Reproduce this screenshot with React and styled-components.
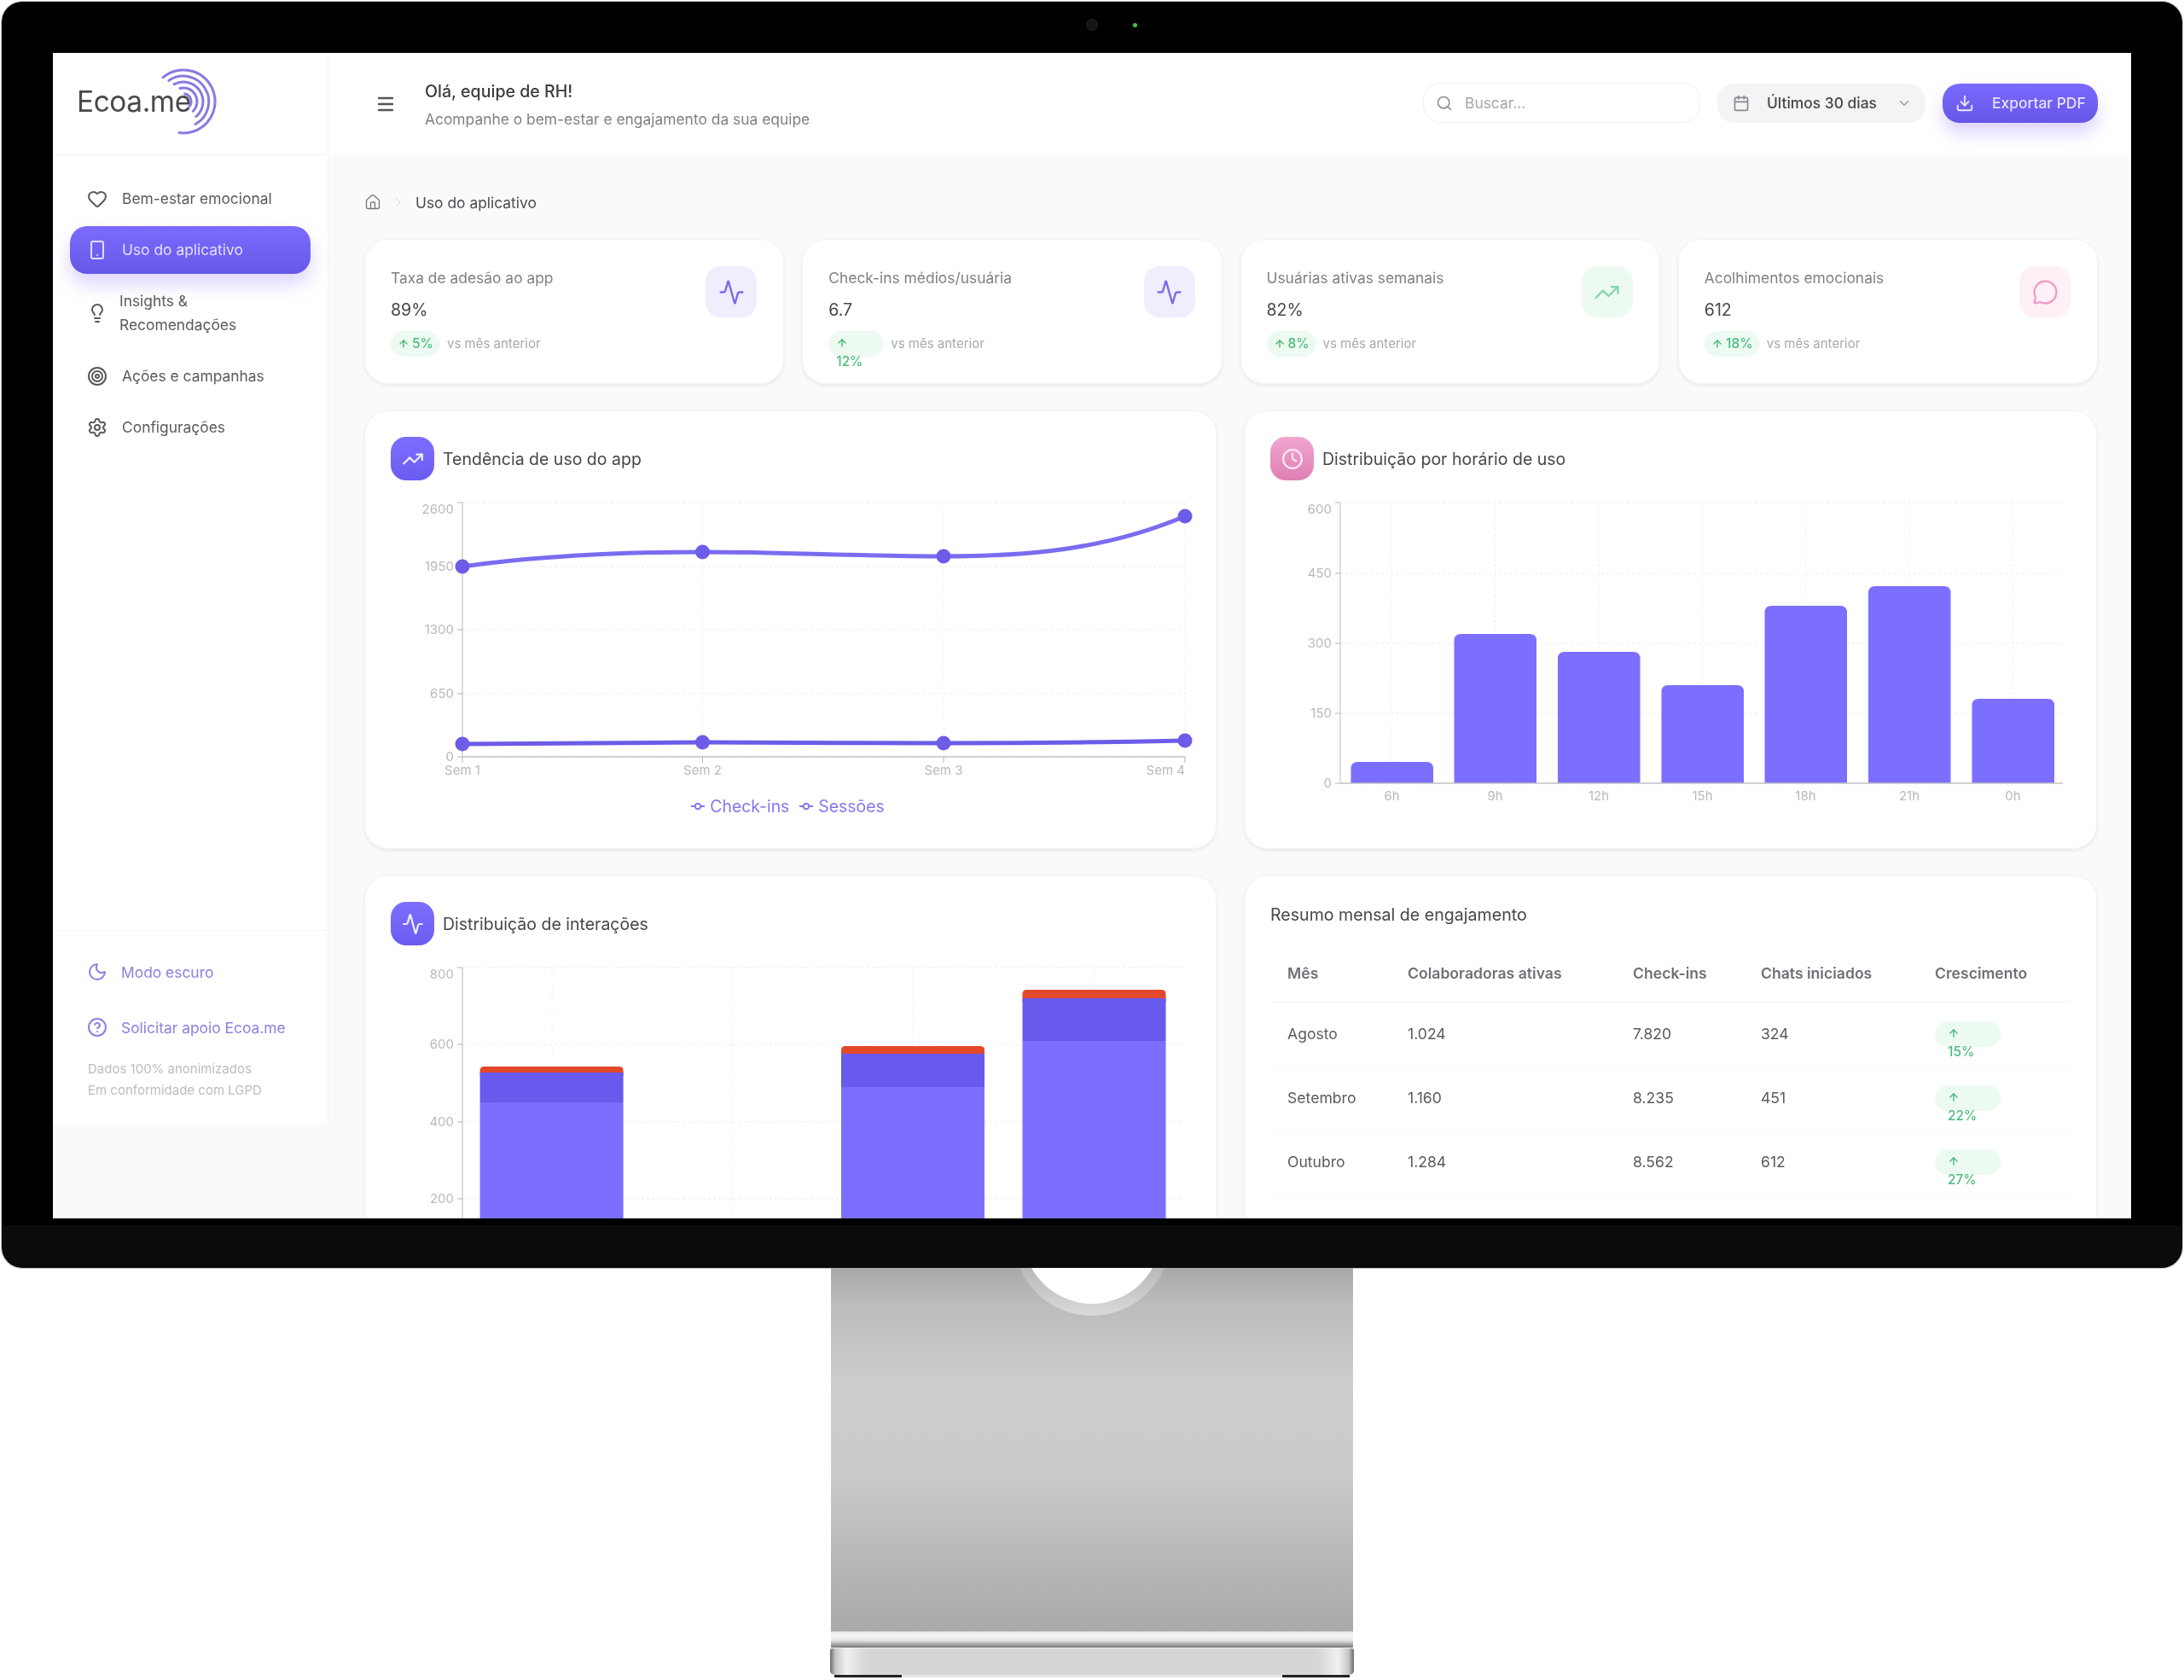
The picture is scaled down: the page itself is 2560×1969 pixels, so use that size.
import React from "react";
import styled, { createGlobalStyle } from "styled-components";
import {
  Heart, Smartphone, Lightbulb, Target, Settings, Moon, CircleHelp, Search, Calendar,
  ChevronDown, Download, Menu, House, ChevronRight, TrendingUp, Clock, Activity, ArrowUp, MessageCircle,
} from "lucide-react";

const Global = createGlobalStyle`
  html, body { margin: 0; padding: 0; background: #fff; }
  body { font-family: Inter, "Noto Sans", sans-serif; width: 2560px; height: 1969px; overflow: hidden; }
  * { box-sizing: border-box; }
`;

const Page = styled.div`
  display: flex;
  flex-direction: column;
  align-items: center;
  padding-top: 2px;
`;
const Monitor = styled.div`
  position: relative;
  width: 2556px;
  height: 1484px;
  padding: 60px;
  border-radius: 24px;
  background: linear-gradient(180deg,#000 0,#000 1434px,#0b0b0b 1434px,#0b0b0b 100%);
  box-shadow: 0 0 0 1px #c4c4c4;
`;
const Camera = styled.span`
  position: absolute;
  left: 1271px;
  top: 20px;
  width: 14px;
  height: 14px;
  border-radius: 50%;
  background: #161616;
  border: 1px solid #222;
`;
const Led = styled.span`
  position: absolute;
  left: 1326px;
  top: 25px;
  width: 5px;
  height: 5px;
  border-radius: 50%;
  background: #3ecb3e;
`;
const Screen = styled.div`
  display: flex;
  width: 2436px;
  height: 1366px;
  overflow: hidden;
  background: #f9fafb;
  box-shadow: 0 0 0 8px #000;
`;
const ScreenInner = styled.div`
  display: flex;
  width: 100%;
  height: 1366px;
  filter: blur(0.55px);
`;

const Sidebar = styled.aside`
  flex: 0 0 323px;
  height: 1255px;
  display: flex;
  flex-direction: column;
  background: #fff;
  border-right: 1px solid #f1f2f4;
`;
const LogoBar = styled.div`
  position: relative;
  height: 120px;
  flex: none;
  display: flex;
  align-items: center;
  padding: 0 0 5px 28px;
  border-bottom: 1px solid #f4f4f6;
`;
const LogoText = styled.span`
  font-size: 33.4px;
  font-weight: 400;
  letter-spacing: -0.4px;
  color: #4a4a4d;
`;
const LogoMark = styled.svg`
  position: absolute;
  left: 53px;
  top: 10px;
`;
const Nav = styled.nav`
  flex: 1;
  display: flex;
  flex-direction: column;
  gap: 4px;
  padding: 23px 20px 0;
`;
const NavItem = styled.div`
  display: flex;
  align-items: center;
  gap: 17px;
  padding: 14px 0 14px 20px;
  border-radius: 20px;
  font-size: 17.4px;
  line-height: 28px;
  color: ${(p) => (p.$active ? "#e3deff" : "#5a5a60")};
  background: ${(p) => (p.$active ? "linear-gradient(180deg,#7c6cff,#6658e6)" : "transparent")};
  box-shadow: ${(p) => (p.$active ? "0 12px 22px rgba(135,100,255,.28)" : "none")};
  svg { flex: none; }
`;
const NavLabel = styled.span`
  margin-left: ${(p) => (p.$tight ? "-3px" : "0")};
`;
const SideFoot = styled.div`
  flex: none;
  height: 227px;
  padding: 23px 0 0 40px;
  border-top: 1px solid #f4f4f6;
`;
const FootLink = styled.div`
  display: flex;
  align-items: center;
  gap: 16px;
  height: 50px;
  margin-bottom: 15px;
  font-size: 17.4px;
  color: #8d80e2;
`;
const FootNote = styled.div`
  margin: -4px 0 0 1px;
  font-size: 15px;
  line-height: 25px;
  color: #bcbcc0;
`;

const Main = styled.main`
  flex: 1;
  min-width: 0;
  display: flex;
  flex-direction: column;
`;
const Header = styled.header`
  height: 120px;
  flex: none;
  display: flex;
  align-items: center;
  gap: 34px;
  padding: 0 39px 0 55px;
  background: #fff;
`;
const Greeting = styled.div`
  display: flex;
  flex-direction: column;
  gap: 8px;
  padding-top: 2px;
`;
const Hello = styled.div`
  font-size: 19.6px;
  line-height: 25px;
  font-weight: 500;
  color: #3c3c40;
`;
const Sub = styled.div`
  font-size: 17.4px;
  line-height: 24px;
  color: #808088;
`;
const HeaderTools = styled.div`
  margin-left: auto;
  display: flex;
  align-items: center;
  gap: 20px;
  padding-bottom: 3px;
`;
const SearchBox = styled.div`
  width: 325px;
  height: 47px;
  display: flex;
  align-items: center;
  gap: 14px;
  padding-left: 14px;
  border: 1px solid #eeeff1;
  border-radius: 20px;
  font-size: 17.4px;
  color: #a5a5ab;
`;
const DateSelect = styled.div`
  width: 244px;
  height: 46px;
  display: flex;
  align-items: center;
  gap: 20px;
  padding: 0 16px 0 18px;
  border-radius: 20px;
  background: #f3f4f6;
  font-size: 17.4px;
  font-weight: 500;
  color: #47474c;
  span { flex: 1; white-space: nowrap; }
`;
const ExportButton = styled.div`
  width: 182px;
  height: 46px;
  display: flex;
  align-items: center;
  gap: 21px;
  padding-left: 15px;
  border-radius: 20px;
  background: linear-gradient(180deg,#7a6bff,#6556e6);
  box-shadow: 0 12px 20px rgba(135,100,255,.28);
  font-size: 17.4px;
  font-weight: 500;
  color: #e6e1ff;
  white-space: nowrap;
`;

const Content = styled.div`
  padding: 43px 39px 0 42px;
`;
const Breadcrumb = styled.div`
  display: flex;
  align-items: center;
  height: 24px;
  gap: 12px;
  margin-bottom: 31px;
  font-size: 17.4px;
  color: #4c4c52;
`;
const StatGrid = styled.div`
  display: grid;
  grid-template-columns: repeat(4, 1fr);
  gap: 21px;
  margin-bottom: 31px;
`;
const Panel = styled.section`
  background: #fff;
  border: 1px solid #f3f4f6;
  border-radius: 28px;
  box-shadow: 0 2px 4px rgba(0,0,0,.07);
`;
const StatCard = styled(Panel)`
  height: 170px;
  padding: 31px 31px 0 30px;
  display: flex;
  justify-content: space-between;
  align-items: flex-start;
`;
const StatLabel = styled.div`
  font-size: 17.4px;
  line-height: 27px;
  color: #808087;
`;
const StatValue = styled.div`
  margin-top: 10px;
  font-size: 19.6px;
  line-height: 28px;
  color: #47474c;
`;
const StatTrend = styled.div`
  margin-top: 11px;
  display: flex;
  align-items: flex-start;
  gap: 8px;
`;
const Badge = styled.div`
  height: 30px;
  width: ${(p) => p.$w}px;
  flex: none;
  display: flex;
  flex-direction: ${(p) => (p.$stack ? "column" : "row")};
  align-items: ${(p) => (p.$stack ? "flex-start" : "center")};
  justify-content: ${(p) => (p.$stack ? "flex-start" : "center")};
  gap: ${(p) => (p.$stack ? "0" : "3px")};
  padding: ${(p) => (p.$stack ? `3px 0 0 ${p.$pad}px` : "0")};
  border-radius: 15px;
  background: #ecfaf1;
  font-size: 15.4px;
  font-weight: 500;
  line-height: 22px;
  color: #4cbb7c;
  > * { flex: none; }
`;
const ArrowSlot = styled.span`
  display: flex;
  align-items: center;
  height: ${(p) => (p.$stack ? "22px" : "auto")};
`;
const TrendNote = styled.span`
  font-size: 15px;
  line-height: 30px;
  color: #a9a9af;
`;
const StatIcon = styled.div`
  width: 60px;
  height: 60px;
  flex: none;
  display: flex;
  align-items: center;
  justify-content: center;
  border-radius: 18px;
  background: ${(p) => p.$bg};
`;
const ChartGrid = styled.div`
  display: grid;
  grid-template-columns: 999px 1000px;
  gap: 31px 32px;
`;
const ChartCard = styled(Panel)`
  height: ${(p) => p.$h}px;
  padding: 30px 30px 0;
`;
const ChartHead = styled.div`
  display: flex;
  align-items: center;
  gap: 10px;
  height: 51px;
  font-size: 19.5px;
  font-weight: 400;
  color: #47474c;
`;
const HeadIcon = styled.div`
  width: 51px;
  height: 51px;
  flex: none;
  display: flex;
  align-items: center;
  justify-content: center;
  border-radius: 18px;
  background: ${(p) => p.$bg};
`;
const Plot = styled.svg`
  display: block;
  margin-top: 8px;
  overflow: visible;
  text {
    font-family: Inter, sans-serif;
    font-size: 15px;
    fill: #b9b9bd;
  }
`;
const Legend = styled.div`
  display: flex;
  justify-content: center;
  gap: 12px;
  margin-top: 7px;
  padding-right: 6px;
  font-size: 19.4px;
  line-height: 28px;
  color: #8577ee;
`;
const LegendItem = styled.span`
  display: flex;
  align-items: center;
  gap: 6px;
`;
const TableTitle = styled.div`
  font-size: 19.6px;
  line-height: 28px;
  font-weight: 400;
  color: #47474c;
`;
const TableCard = styled(Panel)`
  height: 560px;
  padding: 31px 30px 0;
`;
const Table = styled.table`
  width: 100%;
  margin-top: 25px;
  border-collapse: collapse;
  table-layout: fixed;
  font-size: 17.6px;
  color: #5b5b60;
  th {
    height: 63px;
    padding: 0 0 3px 20px;
    text-align: left;
    font-weight: 600;
    color: #6f6f78;
    border-bottom: 1px solid #f3f4f6;
    white-space: nowrap;
  }
  td {
    height: 75px;
    padding: 0 0 0 20px;
    border-bottom: 1px solid #fafafb;
    vertical-align: middle;
  }
`;

const PURPLE = "#6c5ce7";
const LIGHT = "#7c6fff";

const Arrow = ({ size = 14 }) => <ArrowUp size={size} strokeWidth={2.4} color="#47b877" />;

function Trend({ w, stack, pad, value }) {
  return (
    <Badge $w={w} $stack={stack} $pad={pad}>
      <ArrowSlot $stack={stack}><Arrow /></ArrowSlot>
      <span>{value}</span>
    </Badge>
  );
}

function Stat({ label, value, trend, Icon, color, bg }) {
  return (
    <StatCard>
      <div>
        <StatLabel>{label}</StatLabel>
        <StatValue>{value}</StatValue>
        <StatTrend>
          {trend}
          <TrendNote>vs mês anterior</TrendNote>
        </StatTrend>
      </div>
      <StatIcon $bg={bg}><Icon size={31} color={color} strokeWidth={1.8} /></StatIcon>
    </StatCard>
  );
}

const arc = (r, a0, a1) => {
  const cx = 100, cy = 47;
  const p = (a) => [cx + r * Math.cos((a * Math.PI) / 180), cy + r * Math.sin((a * Math.PI) / 180)];
  const [x0, y0] = p(a0);
  const [x1, y1] = p(a1);
  return `M${x0.toFixed(1)} ${y0.toFixed(1)}A${r} ${r} 0 ${a1 - a0 > 180 ? 1 : 0} 1 ${x1.toFixed(1)} ${y1.toFixed(1)}`;
};

function Logo() {
  return (
    <LogoMark width="150" height="100" viewBox="0 0 150 100" fill="none" stroke="#8a7ae0" strokeWidth="3" strokeLinecap="round">
      <path d={arc(37, -130, 98)} />
      <path d={arc(30, -125, 62)} />
      <path d={arc(23, -118, 50)} />
      <path d={arc(16, -105, 45)} />
      <path d={arc(9, -80, 40)} />
    </LogoMark>
  );
}

function YAxis({ x, ticks, right }) {
  return (
    <g>
      {ticks.map(([t, y, ly]) => (
        <g key={t}>
          <line x1={x} x2={right} y1={y} y2={y} stroke="#ececee" strokeDasharray="3 3" />
          <line x1={x - 6} x2={x} y1={y} y2={y} stroke="#b5b5b8" />
          <text x={x - 10} y={(ly ?? y) + 5} textAnchor="end">{t}</text>
        </g>
      ))}
    </g>
  );
}

function TrendChart() {
  const xs = [542, 823.5, 1106, 1389];
  const names = ["Sem 1", "Sem 2", "Sem 3", "Sem 4"];
  const top = [664, 647, 652, 605];
  const low = [872, 870, 871, 868];
  return (
    <Plot width="937" height="353" viewBox="458 571 937 353">
      {xs.slice(1).map((x) => <line key={x} x1={x} x2={x} y1={589} y2={887} stroke="#f0f0f2" strokeDasharray="3 3" />)}
      <YAxis x={542} right={1389} ticks={[[2600, 589, 597], [1950, 664], [1300, 738], [650, 813], [0, 887, 887]]} />
      <line x1={542} x2={542} y1={589} y2={887} stroke="#b5b5b8" />
      <line x1={542} x2={1389} y1={887} y2={887} stroke="#c2c2c5" strokeWidth="1.5" />
      {xs.map((x, i) => (
        <g key={x}>
          <line x1={x} x2={x} y1={887} y2={894} stroke="#b5b5b8" />
          <text x={x} y={908} textAnchor={i === 3 ? "end" : "middle"}>{names[i]}</text>
        </g>
      ))}
      <path d="M542 664C636 651 730 647 823.5 647C917 647 1012 652 1106 652C1200 652 1295 645 1389 605" fill="none" stroke="#7a6cf0" strokeWidth="5" />
      <path d="M542 872C636 871 730 870 823.5 870C917 870 1012 871 1106 871C1200 871 1295 870 1389 868" fill="none" stroke={PURPLE} strokeWidth="5" />
      {xs.map((x, i) => <circle key={x} cx={x} cy={top[i]} r="8.5" fill={PURPLE} />)}
      {xs.map((x, i) => <circle key={x} cx={x} cy={low[i]} r="8.5" fill={PURPLE} />)}
    </Plot>
  );
}

const LegendMark = () => (
  <svg width="16" height="12" viewBox="0 0 16 12" fill="none" stroke="#8577ee" strokeWidth="2">
    <line x1="0" x2="16" y1="6" y2="6" />
    <circle cx="8" cy="6" r="3.2" fill="#fff" />
  </svg>
);

const topBar = (x, y, w, bottom, r, fill) => (
  <path d={`M${x} ${bottom}V${y + r}Q${x} ${y} ${x + r} ${y}H${x + w - r}Q${x + w} ${y} ${x + w} ${y + r}V${bottom}Z`} fill={fill} />
);

function HourChart() {
  const bars = [
    [1583.5, 893, "6h"], [1704.5, 743, "9h"], [1826, 764, "12h"], [1947.5, 803, "15h"],
    [2068.5, 710, "18h"], [2190, 687, "21h"], [2311.5, 819, "0h"],
  ];
  return (
    <Plot width="938" height="353" viewBox="1489 571 938 353">
      {bars.map(([x]) => <line key={x} x1={x + 48} x2={x + 48} y1={589} y2={918} stroke="#f0f0f2" strokeDasharray="3 3" />)}
      <YAxis x={1571} right={2418} ticks={[[600, 589, 597], [450, 672], [300, 754], [150, 836], [0, 918, 918]]} />
      <line x1={1571} x2={1571} y1={589} y2={918} stroke="#bdbdc0" />
      {bars.map(([x, y]) => <g key={x}>{topBar(x, y, 96.5, 918, 8, LIGHT)}</g>)}
      <line x1={1571} x2={2418} y1={918} y2={918} stroke="#c2c2c5" strokeWidth="1.5" />
      {bars.map(([x, , n]) => <text key={x} x={x + 48} y={938} textAnchor="middle">{n}</text>)}
    </Plot>
  );
}

function StackChart() {
  const bars = [[562.6, 1250, 1257, 1292], [986, 1226, 1235, 1274], [1198.5, 1160, 1170, 1220]];
  return (
    <Plot width="937" height="400" viewBox="458 1116 937 400">
      {[647, 858.6, 1070, 1283].map((x) => <line key={x} x1={x} x2={x} y1={1134} y2={1500} stroke="#f0f0f2" strokeDasharray="3 3" />)}
      <YAxis x={542} right={1389} ticks={[[800, 1134, 1142], [600, 1224], [400, 1315], [200, 1405]]} />
      <line x1={542} x2={542} y1={1134} y2={1500} stroke="#b5b5b8" />
      {bars.map(([x, a, b, c]) => (
        <g key={x}>
          {topBar(x, a, 168, b + 4, 5, "#e2492a")}
          <rect x={x} y={b} width={168} height={c - b} fill="#675aec" />
          <rect x={x} y={c} width={168} height={1500 - c} fill={LIGHT} />
        </g>
      ))}
    </Plot>
  );
}

const Stand = styled.div`
  width: 612px;
  display: flex;
  flex-direction: column;
  align-items: stretch;
`;
const StandColumn = styled.div`
  position: relative;
  height: 426px;
  background: linear-gradient(180deg,#a9a9ab 0%,#bcbcbe 10%,#cdcdcf 32%,#cacacc 58%,#b9b9bb 78%,#a9a9ab 100%);
`;
const Notch = styled.svg`
  position: absolute;
  left: 211px;
  top: 0;
`;
const StandLip = styled.div`
  height: 19px;
  background: linear-gradient(180deg,#e2e2e4 0%,#f7f7f8 25%,#e5e5e7 55%,#9a9a9d 85%,#77777a 100%);
`;
const StandBase = styled.div`
  height: 32px;
  margin: 0 -1px;
  border-radius: 3px 3px 5px 5px;
  border-top: 1px solid #efeff0;
  background: linear-gradient(90deg,#6a6a6c 0,#c6c6c8 1%,#f0f0f1 3%,#d6d6d8 7%,#d6d6d8 93%,#f0f0f1 97%,#c6c6c8 99%,#6a6a6c 100%);
`;
const StandFoot = styled.div`
  height: 3px;
  margin: 0 4px;
  background: linear-gradient(90deg,#222 0,#222 13%,#e8e8ea 13%,#e8e8ea 87%,#222 87%,#222 100%);
`;

export default function App() {
  return (
    <Page>
      <Global />
      <Monitor>
        <Camera />
        <Led />
        <Screen>
          <ScreenInner>
            <Sidebar>
              <LogoBar>
                <LogoText>Ecoa.me</LogoText>
                <Logo />
              </LogoBar>
              <Nav>
                <NavItem><Heart size={24} strokeWidth={2} color="#58585c" /><NavLabel>Bem-estar emocional</NavLabel></NavItem>
                <NavItem $active><Smartphone size={24} strokeWidth={2} color="#e3deff" /><NavLabel>Uso do aplicativo</NavLabel></NavItem>
                <NavItem><Lightbulb size={24} strokeWidth={2} color="#58585c" /><NavLabel $tight>Insights &<br />Recomendações</NavLabel></NavItem>
                <NavItem><Target size={24} strokeWidth={2} color="#58585c" /><NavLabel>Ações e campanhas</NavLabel></NavItem>
                <NavItem><Settings size={24} strokeWidth={2} color="#58585c" /><NavLabel>Configurações</NavLabel></NavItem>
              </Nav>
              <SideFoot>
                <FootLink><Moon size={24} strokeWidth={2} color="#8d80e2" />Modo escuro</FootLink>
                <FootLink><CircleHelp size={24} strokeWidth={2} color="#8d80e2" />Solicitar apoio Ecoa.me</FootLink>
                <FootNote>Dados 100% anonimizados<br />Em conformidade com LGPD</FootNote>
              </SideFoot>
            </Sidebar>
            <Main>
              <Header>
                <Menu size={24} strokeWidth={2.4} color="#55555a" />
                <Greeting>
                  <Hello>Olá, equipe de RH!</Hello>
                  <Sub>Acompanhe o bem-estar e engajamento da sua equipe</Sub>
                </Greeting>
                <HeaderTools>
                  <SearchBox><Search size={20} strokeWidth={2} color="#8f8f95" />Buscar...</SearchBox>
                  <DateSelect><Calendar size={20} strokeWidth={2} color="#88888e" /><span>Últimos 30 dias</span><ChevronDown size={18} color="#9a9aa0" /></DateSelect>
                  <ExportButton><Download size={22} strokeWidth={2} color="#eeeaff" />Exportar PDF</ExportButton>
                </HeaderTools>
              </Header>
              <Content>
                <Breadcrumb>
                  <House size={20} strokeWidth={1.6} color="#77777d" />
                  <ChevronRight size={16} strokeWidth={1.5} color="#cfcfd3" />
                  <span>Uso do aplicativo</span>
                </Breadcrumb>
                <StatGrid>
                  <Stat label="Taxa de adesão ao app" value="89%" Icon={Activity} color="#7a6ae8" bg="#f0edfd" trend={<Trend w={58} value="5%" />} />
                  <Stat label="Check-ins médios/usuária" value="6.7" Icon={Activity} color="#7a6ae8" bg="#f0edfd" trend={<Trend w={65} stack pad={9} value="12%" />} />
                  <Stat label="Usuárias ativas semanais" value="82%" Icon={TrendingUp} color="#85d6a8" bg="#ecfaf1" trend={<Trend w={58} value="8%" />} />
                  <Stat label="Acolhimentos emocionais" value="612" Icon={MessageCircle} color="#f09cc6" bg="#fdf0f6" trend={<Trend w={65} value="18%" />} />
                </StatGrid>
                <ChartGrid>
                  <ChartCard $h={514}>
                    <ChartHead>
                      <HeadIcon $bg="linear-gradient(180deg,#7c6fff,#6a5cf0)"><TrendingUp size={26} strokeWidth={2} color="#f1eeff" /></HeadIcon>
                      Tendência de uso do app
                    </ChartHead>
                    <TrendChart />
                    <Legend>
                      <LegendItem><LegendMark />Check-ins</LegendItem>
                      <LegendItem><LegendMark />Sessões</LegendItem>
                    </Legend>
                  </ChartCard>
                  <ChartCard $h={514}>
                    <ChartHead>
                      <HeadIcon $bg="linear-gradient(180deg,#f0a6d0,#df7fb4)"><Clock size={26} strokeWidth={2} color="#fbe8f3" /></HeadIcon>
                      Distribuição por horário de uso
                    </ChartHead>
                    <HourChart />
                  </ChartCard>
                  <ChartCard $h={560}>
                    <ChartHead>
                      <HeadIcon $bg="linear-gradient(180deg,#7c6fff,#6a5cf0)"><Activity size={26} strokeWidth={2} color="#f1eeff" /></HeadIcon>
                      Distribuição de interações
                    </ChartHead>
                    <StackChart />
                  </ChartCard>
                  <TableCard>
                    <TableTitle>Resumo mensal de engajamento</TableTitle>
                    <Table>
                      <colgroup>
                        <col style={{ width: 141 }} /><col style={{ width: 264 }} /><col style={{ width: 150 }} /><col style={{ width: 204 }} /><col />
                      </colgroup>
                      <thead>
                        <tr><th>Mês</th><th>Colaboradoras ativas</th><th>Check-ins</th><th>Chats iniciados</th><th>Crescimento</th></tr>
                      </thead>
                      <tbody>
                        {[
                          ["Agosto", "1.024", "7.820", "324", "15%"],
                          ["Setembro", "1.160", "8.235", "451", "22%"],
                          ["Outubro", "1.284", "8.562", "612", "27%"],
                        ].map((r) => (
                          <tr key={r[0]}>
                            <td>{r[0]}</td><td>{r[1]}</td><td>{r[2]}</td><td>{r[3]}</td>
                            <td><Trend w={77} stack pad={15} value={r[4]} /></td>
                          </tr>
                        ))}
                      </tbody>
                    </Table>
                  </TableCard>
                </ChartGrid>
              </Content>
            </Main>
          </ScreenInner>
        </Screen>
      </Monitor>
      <Stand>
        <StandColumn>
          <Notch width="190" height="60" viewBox="0 0 190 60">
            <defs>
              <linearGradient id="ring" x1="0" y1="0" x2="0" y2="1">
                <stop offset="0" stopColor="#707073" />
                <stop offset="0.55" stopColor="#a8a8ab" />
                <stop offset="1" stopColor="#dadadc" />
              </linearGradient>
            </defs>
            <circle cx="95" cy="-36.5" r="92.5" fill="url(#ring)" />
            <circle cx="95" cy="-39" r="81" fill="#fff" />
          </Notch>
        </StandColumn>
        <StandLip />
        <StandBase />
        <StandFoot />
      </Stand>
    </Page>
  );
}
